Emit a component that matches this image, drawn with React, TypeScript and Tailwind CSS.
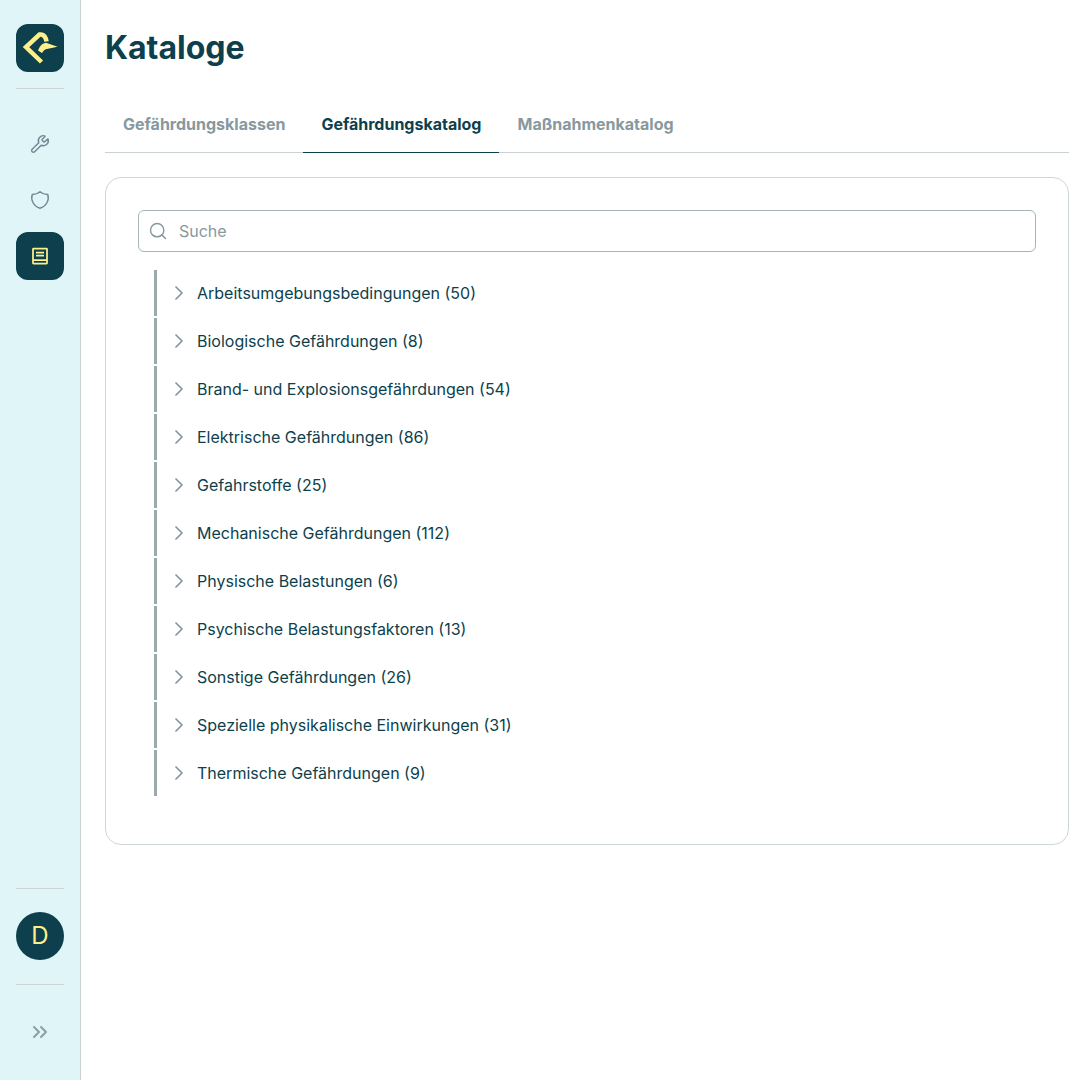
import { ChevronRight, ChevronsRight, Search, Wrench } from "lucide-react";
import { TbShield } from "react-icons/tb";

const tabs = [
  { label: "Gefährdungsklassen", active: false },
  { label: "Gefährdungskatalog", active: true },
  { label: "Maßnahmenkatalog", active: false },
];

const categories = [
  "Arbeitsumgebungsbedingungen (50)",
  "Biologische Gefährdungen (8)",
  "Brand- und Explosionsgefährdungen (54)",
  "Elektrische Gefährdungen (86)",
  "Gefahrstoffe (25)",
  "Mechanische Gefährdungen (112)",
  "Physische Belastungen (6)",
  "Psychische Belastungsfaktoren (13)",
  "Sonstige Gefährdungen (26)",
  "Spezielle physikalische Einwirkungen (31)",
  "Thermische Gefährdungen (9)",
];

function Logo() {
  return (
    <svg width="48" height="48" viewBox="0 0 48 48" fill="none">
      <path d="M30.5 17.5 Q29.5 11 25 10.5 H23.5 L10 23 L25.5 38" stroke="#fdf08a" strokeWidth="4.5" />
      <path d="M22 26.5 Q24.5 19.5 30 18.8 L41.5 22.7 L31 25 Q28.5 25 26 29 Z" fill="#fdf08a" />
    </svg>
  );
}

function NotebookIcon() {
  return (
    <svg width="24" height="24" viewBox="0 0 24 24" fill="none" stroke="#fdf08a" strokeWidth="1.75">
      <rect x="5" y="4.5" width="14" height="15" rx="0.5" />
      <path d="M8 8.5 H16 M8 11.5 H16 M5 16 H19" />
    </svg>
  );
}

function Sidebar() {
  return (
    <aside className="flex w-[81px] shrink-0 flex-col items-center border-r border-[#c9d1d3] bg-[#e0f5f8] pt-6 pb-6">
      <div className="flex h-12 w-12 items-center justify-center rounded-xl bg-[#0d3f4c]">
        <Logo />
      </div>
      <div className="mt-4 mb-[31px] h-px w-12 bg-[#cfd3d4]" />
      <div className="flex flex-col gap-2">
        <button className="flex h-12 w-12 items-center justify-center rounded-xl text-[#6f8a92]">
          <Wrench size={20} strokeWidth={1.75} />
        </button>
        <button className="flex h-12 w-12 items-center justify-center rounded-xl text-[#6f8a92]">
          <TbShield size={22} strokeWidth={1.5} />
        </button>
        <button className="flex h-12 w-12 items-center justify-center rounded-xl bg-[#0d3f4c]">
          <NotebookIcon />
        </button>
      </div>
      <div className="mt-auto h-px w-12 bg-[#cfd3d4]" />
      <div className="mt-[23px] mb-6 flex h-12 w-12 items-center justify-center rounded-full bg-[#0d3f4c] text-2xl text-[#fdf08a]">
        D
      </div>
      <div className="h-px w-12 bg-[#cfd3d4]" />
      <button className="mt-[35px] mb-3 flex h-6 w-12 items-center justify-center text-[#87a0a7]">
        <ChevronsRight size={24} strokeWidth={2} />
      </button>
    </aside>
  );
}

export default function App() {
  return (
    <div className="flex min-h-[1080px] bg-white font-['Inter',sans-serif] text-[#0d3f4c]">
      <Sidebar />
      <main className="flex-1 pt-6 pr-[18px] pl-6">
        <h1 className="text-[32px] leading-12 font-bold">Kataloge</h1>
        <div className="mt-6 flex border-b border-[#c9d1d3]">
          {tabs.map((tab) => (
            <button
              key={tab.label}
              className={
                tab.active
                  ? "-mb-px border-b border-[#0d3f4c] px-[18px] py-4 text-base leading-6 font-bold text-[#0d3f4c]"
                  : "-mb-px border-b border-transparent px-[18px] py-4 text-base leading-6 font-bold text-[#87989e]"
              }
            >
              {tab.label}
            </button>
          ))}
        </div>
        <section className="mt-6 h-[668px] rounded-2xl border border-[#cfd6d8] px-8 pt-8">
          <div className="flex h-[42px] items-center gap-[11px] rounded-md border border-[#a7b5b9] pl-[9px]">
            <Search size={20} strokeWidth={1.75} className="text-[#87989e]" />
            <span className="text-base text-[#87989e]">Suche</span>
          </div>
          <ul className="mt-[18px] flex flex-col gap-0.5 pl-4">
            {categories.map((name) => (
              <li key={name} className="flex h-[46px] items-center gap-1.5 border-l-[3px] border-[#9aa9ad] pl-2.5">
                <ChevronRight size={24} strokeWidth={1.75} className="text-[#84979d]" />
                <span className="text-base leading-6">{name}</span>
              </li>
            ))}
          </ul>
        </section>
      </main>
    </div>
  );
}
